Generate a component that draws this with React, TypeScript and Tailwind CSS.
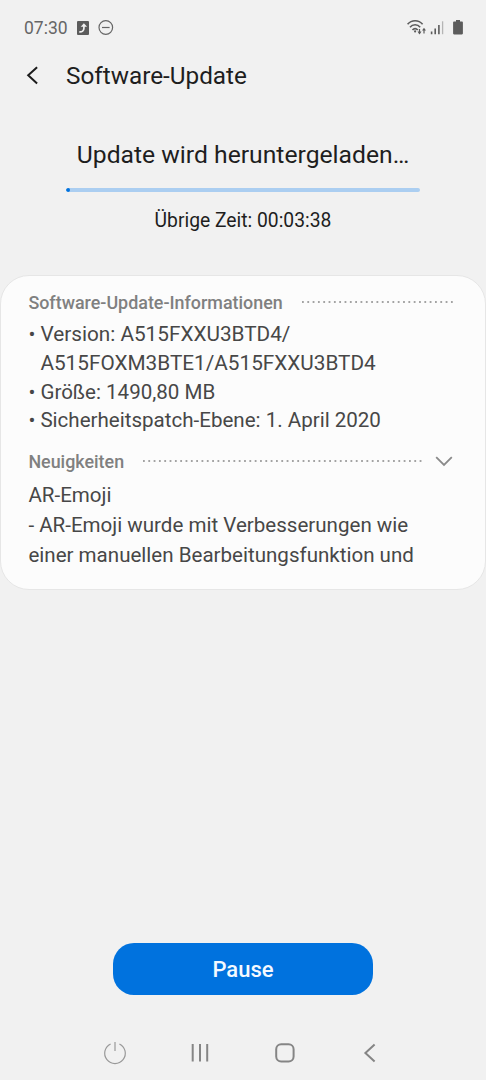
import type { ReactNode } from 'react'

const NEWS = [
  'AR-Emoji',
  '- AR-Emoji wurde mit Verbesserungen wie',
  'einer manuellen Bearbeitungsfunktion und',
]

export default function App() {
  return (
    <div className="flex h-[1080px] w-[486px] flex-col overflow-hidden bg-[#f1f1f1] font-['Roboto',sans-serif] text-[#1e1e1e]">
      <StatusBar />
      <header className="flex h-10 shrink-0 items-center pl-6">
        <button type="button" aria-label="Zurück" className="w-[42px]">
          <svg width="18" height="22" viewBox="0 0 18 22" fill="none" stroke="#1c1c1c" strokeWidth="2">
            <path d="M13.1 2.2 4.2 10.2l8.9 8.3" />
          </svg>
        </button>
        <h1 className="text-[24.3px] whitespace-nowrap">Software-Update</h1>
      </header>

      <DownloadProgress percent={1} />
      <InfoCard />

      <div className="flex flex-1 items-end justify-center">
        <button type="button" className="h-[52px] w-[260px] rounded-[21px] bg-[#0072de] pt-px text-[22px] font-medium text-[#f4f9ff]">
          Pause
        </button>
      </div>
      <NavigationBar />
    </div>
  )
}

// ── Status bar ────────────────────────────────────────────────────────────────

function StatusBar() {
  return (
    <div className="flex h-14 shrink-0 items-center justify-between pr-[22px] pl-6 text-[#666]">
      <div className="flex items-center">
        <span className="w-[53px] text-[17.5px] leading-7">07:30</span>
        <svg width="12" height="14" viewBox="0 0 12 14">
          <rect width="12" height="14" rx="1" fill="#5c5c5c" />
          <path d="M2.3 10.8c2.8.2 4.6-.9 4.6-3.6V4.8" fill="none" stroke="#f1f1f1" strokeWidth="1.7" />
          <path d="M3.7 5.8 6.9 2.3l3.2 3.5Z" fill="#f1f1f1" />
        </svg>
        <svg className="ml-[9px]" width="16" height="16" viewBox="0 0 16 16" fill="none" stroke="#666" strokeWidth="1.2">
          <circle cx="7.8" cy="7.5" r="6.8" />
          <path d="M4 7.5h7.6" />
        </svg>
      </div>
      <svg width="58" height="18" viewBox="0 0 58 18" fill="none" stroke="#5c5c5c">
        {/* wifi with traffic arrows */}
        <path d="M1.6 5.2c4-4.7 11-4.7 15 0M4 8.2c2.7-3.2 7.5-3.2 10.2 0M6.5 11c1.5-1.9 3.7-1.9 5.2 0" strokeWidth="1.6" />
        <circle cx="9.1" cy="12.4" r="1.1" fill="#5c5c5c" stroke="none" />
        <path d="M13.5 10v4.5M18 14.5V10" strokeWidth="1.2" />
        <path d="M11.5 12.6h4l-2 2.9ZM16 11.6h4l-2-2.9Z" fill="#5c5c5c" stroke="none" />
        {/* signal */}
        <path d="M25.6 15.2v-2.8M29.2 15.2V9.5M32.9 15.2V6" strokeWidth="1.6" />
        <path d="M36.6 15.2V2.3" stroke="#b5b5b5" strokeWidth="1.3" />
        {/* battery */}
        <path d="M50 1h4v1.6h2q.9 0 .9.8v11.2q0 .8-.9.8h-8q-.9 0-.9-.8V3.4q0-.8.9-.8h2Z" fill="#5c5c5c" stroke="none" />
      </svg>
    </div>
  )
}

// ── Download progress ─────────────────────────────────────────────────────────

function DownloadProgress({ percent }: { percent: number }) {
  return (
    <section className="flex h-[179px] shrink-0 flex-col items-center pt-[43px]">
      <h2 className="h-8 text-[24.7px] leading-8 whitespace-nowrap">Update wird heruntergeladen…</h2>
      <div className="mt-[17px] h-1 w-[354px] shrink-0 overflow-hidden rounded-full bg-[#abcef1]">
        <div className="h-full rounded-full bg-[#0072de]" style={{ width: `${percent}%` }} />
      </div>
      <p className="mt-[15px] text-[19.3px] leading-7 whitespace-nowrap">Übrige Zeit: 00:03:38</p>
    </section>
  )
}

// ── Update information ────────────────────────────────────────────────────────

function InfoCard() {
  return (
    <main className="h-[315px] shrink-0 rounded-[29px] border border-[#e6e6e6] bg-[#fcfcfc] pt-[15px] pr-[30px] pl-[27.4px] text-[20.55px] text-[#474747]">
      <SectionTitle label="Software-Update-Informationen" />
      <ul className="pt-[5px]">
        <InfoItem>
          <span className="block h-[29px] text-[20.75px] leading-[29px]">Version: A515FXXU3BTD4/</span>
          <span className="block h-[29px] text-[20.75px] leading-[29px]">A515FOXM3BTE1/A515FXXU3BTD4</span>
        </InfoItem>
        <InfoItem>Größe: 1490,80 MB</InfoItem>
        <InfoItem>Sicherheitspatch-Ebene: 1. April 2020</InfoItem>
      </ul>
      <div className="pt-[16px]">
        <SectionTitle label="Neuigkeiten">
          <svg className="mr-[2px] ml-[13px]" width="18" height="12" viewBox="0 0 18 12" fill="none" stroke="#8a8a8a" strokeWidth="1.8">
            <path d="M1.2 1.2 9 9l7.8-7.8" />
          </svg>
        </SectionTitle>
      </div>
      <div className="pt-[6px] leading-[30px] whitespace-nowrap">
        {NEWS.map(line => (
          <p key={line}>{line}</p>
        ))}
      </div>
    </main>
  )
}

function SectionTitle({ label, children }: { label: string; children?: ReactNode }) {
  return (
    <div className="flex h-6 items-center">
      <h3 className="text-[17.9px] font-medium whitespace-nowrap text-[#808080]">{label}</h3>
      <svg className="mb-[2px] ml-[19px] h-[2px] min-w-0 flex-1">
        <line x1="0" y1="1" x2="100%" y2="1" stroke="#a3a3a3" strokeWidth="1.8" strokeDasharray="1.8 3.52" />
      </svg>
      {children}
    </div>
  )
}

function InfoItem({ children }: { children: ReactNode }) {
  return (
    <li className="flex leading-7 whitespace-nowrap">
      <span className="w-[12px] shrink-0">•</span>
      <div>{children}</div>
    </li>
  )
}

// ── Navigation bar ────────────────────────────────────────────────────────────

function NavigationBar() {
  return (
    <nav className="flex h-[85px] shrink-0 items-center justify-center gap-[61px] pt-[31px] pr-[2px]">
      <svg width="24" height="24" viewBox="0 0 24 24" fill="none" stroke="#999" strokeWidth="1.2">
        <path d="M7.6 3a10.3 10.3 0 1 0 8.8 0M12 1v9" />
      </svg>
      <svg width="24" height="24" viewBox="0 0 24 24" stroke="#858585" strokeWidth="2">
        <path d="M4.7 3v17.5M12 3v17.5M19.2 3v17.5" />
      </svg>
      <svg width="24" height="24" viewBox="0 0 24 24" fill="none" stroke="#858585" strokeWidth="2">
        <rect x="3.2" y="3.2" width="17.4" height="17.4" rx="5" />
      </svg>
      <svg width="24" height="24" viewBox="0 0 24 24" fill="none" stroke="#858585" strokeWidth="2">
        <path d="M16.6 3.6 7.4 12l9.2 8.4" />
      </svg>
    </nav>
  )
}
